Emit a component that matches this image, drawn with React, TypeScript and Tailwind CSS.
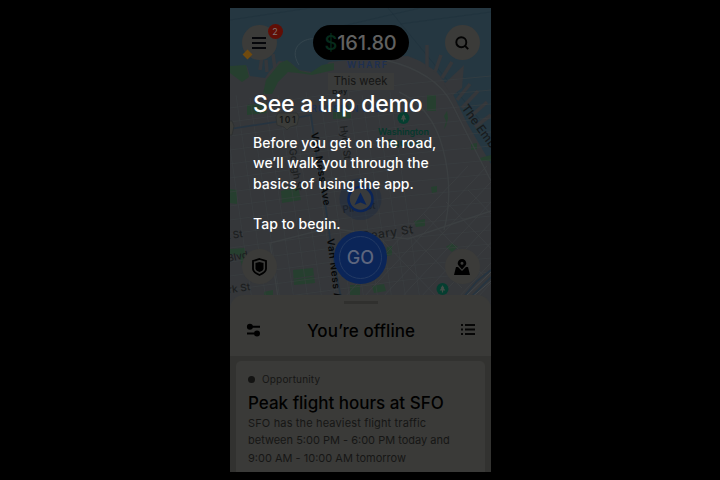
import type { ReactNode } from "react";

const FONT = "font-['Inter','Liberation_Sans',sans-serif]";

function CityMap() {
  const streets: string[] = [];
  for (let i = 0; i < 13; i++) {
    streets.push(`M${-8 + i * 14} ${92 + (i % 3) * 3} L${22 + i * 14} 300`);
  }
  for (let i = 0; i < 15; i++) {
    streets.push(`M0 ${108 + i * 14} L${176} ${84 + i * 14} L261 ${76 + i * 14}`);
  }
  const southern: string[] = [];
  for (let i = 0; i < 9; i++) {
    southern.push(`M${112 + i * 19} 300 L${238 + i * 19} 166`);
  }
  for (let i = 0; i < 5; i++) {
    southern.push(`M${150 + i * 22} ${238 - i * 12} L${210 + i * 22} ${300 - i * 12}`);
  }
  return (
    <svg className="absolute inset-0 h-[304px] w-[261px]" viewBox="0 8 261 304" fontFamily="Inter, 'Liberation Sans', sans-serif">
      <rect y="8" width="261" height="304" fill="#293d48" />
      <g fill="none" stroke="#233642" strokeWidth=".7">
        <path d="M0 20L80 8M95 30L190 8M158 8L250 120M170 24L261 12" />
        <path d="M69 65C57 46 76 37 86 39S101 48 97 56" stroke="#3a4c55" strokeWidth="1" />
      </g>
      <path d="M0 67L17 66L20 76L35 78L39 72L49 61L60 62L69 70L82 72L93 68L99 62L138 58L178 56L190 61L207 72L222 92L237 123L261 164V312H0Z" fill="#3a3d40" />
      <g stroke="#3a3d40" strokeWidth="3.5">
        <path d="M197 68V45M205 72L211 55M212 78L222 62M30 70L32 56M37 72L36 60M45 69L43 54M227 100L240 84M232 108L248 91M239 118L257 102M245 127L261 115" />
      </g>
      <path d="M214 84L231 68L234 65L232 88L222 96Z" fill="#3a3d40" />
      <g fill="#2a4634">
        <path d="M0 66L16 65L19 77L12 82L0 73ZM33 94L36 80L50 63L57 60L70 71L80 73L92 65L104 63V70L82 75L68 73L58 72L48 82L42 94Z" />
        <path d="M17 105L37 102V113L17 115ZM103 107L121 104V118L103 119ZM197 95L206 95V111L197 111ZM217 111L218 118L216 126L214 129L216 121L214 116ZM241 144L247 143V149L241 150ZM250 158L261 155V161H250Z" />
        <path d="M0 189L7 190V204L0 203ZM51 191L68 187L71 200L52 203ZM0 249L15 248V254L12 266L9 255L0 254ZM63 270L83 268L85 283L64 285ZM184 221L195 219V226L186 227ZM216 247L222 243L228 247L222 252ZM157 247L162 246V255L156 256ZM142 286L154 284L156 291L144 293ZM120 285L130 285V295H120ZM34 292L43 290V297H34ZM201 187L207 186V192L202 193Z" />
      </g>
      <g fill="none" stroke="#44474a" strokeWidth="1">
        <path d={streets.join("")} opacity=".5" />
        <path d={southern.join("")} opacity=".7" />
        <path d="M155 60Q206 72 222 104T261 181M169 92Q202 107 213 149T214 230M48 298L40 243L99 228L178 239L240 218L261 211" strokeWidth="1.4" opacity=".8" />
      </g>
      <path d="M64 279L84 276" stroke="#3a3d40" />
      <g fill="none" stroke="#2a3947" strokeWidth="1.7">
        <path d="M0 129L45 122L81 115L87 159L96 209L101 245L111 298" />
        <path d="M231 300L247 281L261 270M238 300L261 277" />
      </g>
      <g fill="none" stroke="#50565a" strokeWidth=".7"><path d="M234 298L261 272M241 298L261 281" /></g>
      <g fill="#41423f" stroke="#2d3031" strokeWidth=".6">
        <path d="M48 113H67L69 117L67 125L60 127L57 130L54 127L47 125L46 117Z" />
        <path d="M-8 121H2L4 126L2 135H-8Z" />
      </g>
      <text x="49.5" y="122.5" fill="#141617" fontSize="8.5" fontWeight="600" textLength="16">101</text>
      <g fill="#213459" fontSize="9" fontWeight="600">
        <text x="117" y="67.5" textLength="40">WHARF</text>
        <text x="81" y="111.5" textLength="75">RUSSIAN HILL</text>
      </g>
      <g fill="#151719" fontSize="10" fontWeight="500">
        <text transform="translate(102 94) rotate(-3)" fontSize="9">Bay</text>
        <text transform="translate(81 133) rotate(80)" fontWeight="600" textLength="74" fill="#070808">Van Ness Ave</text>
        <text transform="translate(97 239) rotate(83)" fontWeight="600" textLength="74" fill="#070808">Van Ness Ave</text>
        <text transform="translate(59 149) rotate(81)" fill="#1f2223" textLength="43">Gough St</text>
        <text transform="translate(110 126) rotate(83)" fill="#1f2223" textLength="34">Hyde St</text>
        <text transform="translate(231 108) rotate(54)" fill="#1a1d1f" fontSize="12">The Embarcadero</text>
        <text transform="translate(113 213) rotate(-8)" fill="#1f2223" textLength="33">Pine St</text>
        <text transform="translate(132 240.5) rotate(-8)" fill="#1f2223" fontSize="12" textLength="52">Geary St</text>
        <text transform="translate(-8 240) rotate(-8)" fill="#1f2223">st St</text>
        <text transform="translate(-2 262) rotate(-12)" fill="#1f2223">Blvd</text>
        <text transform="translate(-7 294) rotate(-8)" fill="#1f2223">ark St</text>
      </g>
      <g fill="#083e31" fontSize="9" fontWeight="600">
        <text x="148" y="135" textLength="51">Washington</text>
        <text x="157" y="146" textLength="34">Square</text>
      </g>
      {[[173.5, 118], [212.5, 289]].map(([x, y]) => (
        <g key={x} transform={`translate(${x} ${y})`}>
          <circle r="6" fill="#064435" /><path d="M0-3.8L1.8-1H1.3L2.8 1.6H.6V3.6H-.6V1.6H-2.8L-1.3-1H-1.8Z" fill="#4a554f" />
        </g>
      ))}
      <circle cx="130.5" cy="199" r="21" fill="#1b2c48" opacity=".35" />
      <circle cx="130.5" cy="199" r="12" fill="#3f4142" stroke="#0b2861" strokeWidth="2.5" />
      <path d="M130.5 192.5L136.5 205L130.5 202.5L124.5 205Z" fill="#0b2861" />
    </svg>
  );
}

function RoundButton({ label, children }: { label: string; children: ReactNode }) {
  return (
    <button aria-label={label} className="relative flex size-[35px] items-center justify-center rounded-full bg-[#41413f]">
      {children}
    </button>
  );
}

export default function App() {
  return (
    <div className={`flex h-[480px] w-[720px] justify-center overflow-hidden bg-black py-2 text-black ${FONT}`}>
      <main className="relative ml-[1px] flex h-[464px] w-[261px] flex-col overflow-hidden">
        <CityMap />
        <header className="relative flex items-center justify-between px-[11.5px] pt-[17px]">
          <RoundButton label="Menu">
            <svg className="size-[14px]" viewBox="0 0 14 14"><path d="M0 2H14M0 7H14M0 12H14" stroke="#05070b" strokeWidth="2" /></svg>
            <span className="absolute -top-px left-[26px] flex size-[15px] items-center justify-center rounded-full bg-[#6a1007] text-[9px] text-[#8a8381]">2</span>
            <span className="absolute bottom-[2px] left-[2px] size-[7px] rotate-45 bg-[#7b520f]" />
          </RoundButton>
          <div className="flex h-[35px] w-[96px] items-center justify-center rounded-full bg-black text-[20px] font-medium tracking-[-0.15px] text-[#6b6b6a]">
            <span className="text-[#07301e]">$</span>161.80
          </div>
          <RoundButton label="Search">
            <svg className="size-[14px]" viewBox="0 0 14 14" fill="none" stroke="#030303" strokeWidth="1.9"><circle cx="6.3" cy="6.2" r="5" /><path d="M9.8 9.7L13.2 13.2" /></svg>
          </RoundButton>
        </header>
        <div className="relative mx-auto mt-[13px] flex h-[17px] w-[66px] items-center justify-center bg-[#404140] text-[11.2px] whitespace-nowrap text-[#171716]">This week</div>
        <div className="relative mt-[141px] flex items-end justify-between px-[11.5px]">
          <RoundButton label="Safety">
            <svg className="h-[18px] w-[15px]" viewBox="0 0 15 18"><path d="M7.5 1L14 3V11Q14 14 7.5 17Q1 14 1 11V3Z" fill="none" stroke="#000" strokeWidth="1.8" /><path d="M3.5 5L7.5 4L11.5 5V11Q11 13 7.5 14Q4 13 3.5 11Z" /></svg>
          </RoundButton>
          <button className="flex size-[53px] items-center justify-center rounded-full bg-[#0c2961] p-[5px]">
            <span className="flex size-full items-center justify-center rounded-full border border-[#27406e] text-[18px] font-medium text-[#67708a]">GO</span>
          </button>
          <RoundButton label="Map area">
            <svg className="h-[16px] w-[16px]" viewBox="0 0 16 16"><path d="M2 8H4L8 12L12 8H14L16 16H0Z" /><path fillRule="evenodd" d="M8 0A4.3 4.3 0 0 0 3.7 4.3C3.7 6 5 7.2 8 10.5C11 7.2 12.3 6 12.3 4.3A4.3 4.3 0 0 0 8 0ZM8 2.8A1.5 1.5 0 1 1 8 5.8A1.5 1.5 0 0 1 8 2.8Z" /></svg>
          </RoundButton>
        </div>
        <section className="relative mt-auto flex h-[177px] flex-col rounded-t-[14px] bg-[#40403e]">
          <div className="mx-auto mt-[6px] h-[3px] w-[34px] bg-[#353533]" />
          <div className="flex h-[52px] items-center justify-between px-[16px]">
            <svg className="size-[15px]" viewBox="0 0 15 15"><path d="M3 3.7H14M1 10.5H11" stroke="#000" strokeWidth="1.9" /><circle cx="3.9" cy="3.7" r="3" /><circle cx="11" cy="10.5" r="3" /></svg>
            <h2 className="pt-[4px] text-[17px] font-medium tracking-[0.05px]">You’re offline</h2>
            <svg className="mb-px h-[13px] w-[14px]" viewBox="0 0 14 13" stroke="#070707" strokeWidth="1.8"><path d="M0 2H2M4 2H14M0 6.5H2M4 6.5H14M0 11H2M4 11H14" /></svg>
          </div>
          <div className="flex flex-1 flex-col bg-[#373735] px-[6px] pt-[5px]">
            <article className="flex-1 rounded-t-[5px] bg-[#40403e] px-[12px] pt-[11px]">
              <div className="flex h-[14px] items-center gap-[7px] text-[10px] tracking-[0.17px] text-[#181817]"><span className="size-[7px] rounded-full bg-[#151514]" />Opportunity</div>
              <h3 className="mt-[5px] h-[24px] text-[17px] leading-[24px] font-medium whitespace-nowrap">Peak flight hours at SFO</h3>
              <p className="text-[11px] leading-[17.4px] whitespace-nowrap text-[#181817]"><span className="tracking-[0.15px]">SFO has the heaviest flight traffic</span><br />between 5:00 PM - 6:00 PM today and<br />9:00 AM - 10:00 AM tomorrow</p>
            </article>
          </div>
        </section>
        <div className="absolute inset-0 bg-[radial-gradient(circle,rgba(0,0,0,.16)_0.5px,transparent_1px)] bg-[length:2px_2px]" />
        <div className="absolute top-[80px] left-[23px] whitespace-nowrap text-white">
          <h1 className="text-[23px] leading-[32px] font-medium tracking-[-0.2px]">See a trip demo</h1>
          <p className="mt-[13px] text-[14px] leading-[20.3px] font-medium tracking-[0.05px]">Before you get on the road,<br />we’ll walk you through the<br />basics of using the app.<br /><br />Tap to begin.</p>
        </div>
      </main>
    </div>
  );
}
